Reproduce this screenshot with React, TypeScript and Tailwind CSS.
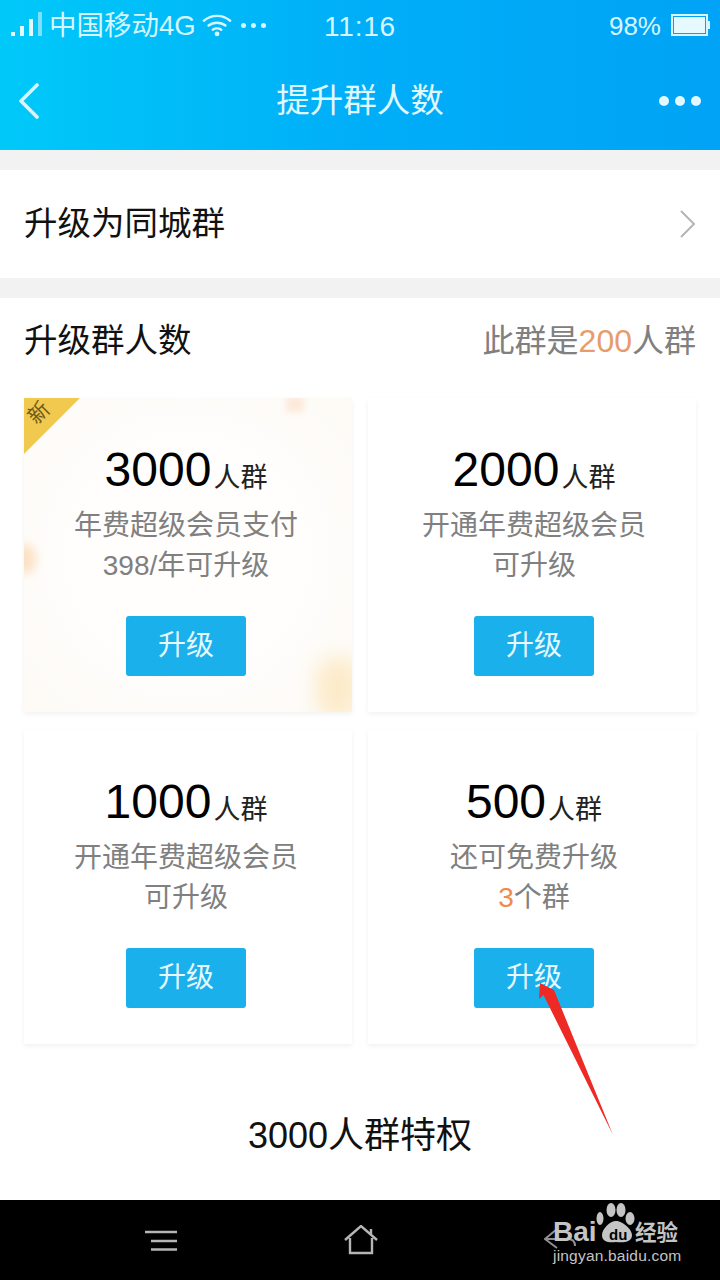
import type { ReactNode } from 'react'

const font = { fontFamily: '"Liberation Sans", "Noto Sans CJK SC", sans-serif' }

const plans: { size: string; lines: ReactNode[]; fresh?: boolean }[] = [
  { size: '3000', lines: ['年费超级会员支付', '398/年可升级'], fresh: true },
  { size: '2000', lines: ['开通年费超级会员', '可升级'] },
  { size: '1000', lines: ['开通年费超级会员', '可升级'] },
  { size: '500', lines: ['还可免费升级', <><span className="text-[#ee8a52]">3</span>个群</>] },
]

function StatusBar() {
  return (
    <div className="h-[50px] flex items-center pl-[11px] pr-[10px] text-[#d6f5ff]">
      {/* Signal */}
      <svg width="32" height="28" viewBox="0 0 32 28" className="shrink-0 -mt-[1px]">
        <rect x="0" y="21" width="4" height="4" fill="#e4f9ff" />
        <rect x="9" y="15" width="4" height="10" fill="#e4f9ff" />
        <rect x="18" y="8" width="4" height="17" fill="#e4f9ff" />
        <rect x="27" y="1" width="4" height="24" fill="#7fe0fb" />
      </svg>
      <span className="ml-[6px] mt-[2px] text-[27.5px] leading-none w-[153px] whitespace-nowrap">中国移动4G</span>
      {/* Wifi */}
      <svg width="30" height="26" viewBox="0 0 32 26" fill="none" stroke="#d6f5ff" strokeWidth="2.6" strokeLinecap="round" className="shrink-0">
        <path d="M2 8.5C10 1.5 22 1.5 30 8.5" />
        <path d="M7 13.5C12 9.5 20 9.5 25 13.5" />
        <path d="M11.5 18C14 16.2 18 16.2 20.5 18" />
        <circle cx="16" cy="22.5" r="2.6" fill="#d6f5ff" stroke="none" />
      </svg>
      <div className="flex gap-[5px] ml-[9px]">
        <span className="w-[5px] h-[5px] rounded-full bg-[#d6f5ff]" />
        <span className="w-[5px] h-[5px] rounded-full bg-[#d6f5ff]" />
        <span className="w-[5px] h-[5px] rounded-full bg-[#d6f5ff]" />
      </div>
      <span className="ml-[58px] mt-[4px] text-[28px] leading-none tracking-[0.8px]">11:16</span>
      <span className="ml-auto mt-[1px] text-[26px] leading-none">98%</span>
      {/* Battery */}
      <div className="ml-[10px] flex items-center">
        <div className="w-[37px] h-[22px] border-2 border-[#d6f5ff] p-[1px]">
          <div className="w-full h-full bg-[#e6f9ff]" />
        </div>
        <div className="w-[2px] h-[8px] bg-[#d6f5ff]" />
      </div>
    </div>
  )
}

function PlanCard({ size, lines, fresh, right }: { size: string; lines: ReactNode[]; fresh?: boolean; right: boolean }) {
  return (
    <div className={`relative h-[314px] flex flex-col items-center pt-[44px] shadow-[0_2px_5px_rgba(0,0,0,0.06)] ${right ? 'pl-[4px]' : 'pr-[4px]'} ${fresh ? 'bg-[radial-gradient(circle,#fffefd_45%,#fdfaf5_100%)]' : 'bg-white'}`}>
      {fresh && (
        <>
          <div className="absolute inset-0 overflow-hidden">
            <div className="absolute left-[262px] -top-[2px] w-[18px] h-[16px] bg-[#fce9da] blur-[3px]" />
            <div className="absolute -left-[12px] top-[146px] w-[24px] h-[30px] rounded-full bg-[#fbe2c6] blur-[5px]" />
            <div className="absolute -right-[8px] -bottom-[8px] w-[44px] h-[64px] rounded-full bg-[#fcebc9] blur-[10px]" />
          </div>
          <div className="absolute left-0 top-0 w-[56px] h-[56px] bg-[#f0c94e] [clip-path:polygon(0_0,100%_0,0_100%)]" />
          <span className="absolute left-[4px] top-[4px] text-[21px] leading-none text-[#6e5a1c] -rotate-45">新</span>
        </>
      )}
      <div className="relative h-[56px] flex items-end leading-none text-black">
        <span className="text-[48px] leading-[56px]">{size}</span>
        <span className="text-[27px] leading-[40px] ml-[2px] text-[#222]">人群</span>
      </div>
      <div className="relative mt-[8px] text-[28px] leading-[40px] text-[#808080] text-center">
        {lines.map((line, i) => (
          <div key={i}>{line}</div>
        ))}
      </div>
      <button className="relative mt-[30px] w-[120px] h-[60px] rounded-[3px] bg-[#1ab0ec] text-[28px] text-[#e6f9ff]">升级</button>
    </div>
  )
}

export default function App() {
  return (
    <div className="relative w-[720px] h-[1280px] flex flex-col overflow-hidden bg-[#f2f2f2]" style={font}>
      {/* Header */}
      <header className="h-[150px] shrink-0 bg-gradient-to-r from-[#00c9f9] via-[#00aef8] to-[#00a3f5]">
        <StatusBar />
        <div className="h-[100px] flex items-center px-[16px] pt-[1px]">
          <div className="w-[60px] pl-[2px]">
            <svg width="22" height="36" viewBox="0 0 22 36" fill="none" stroke="#d8f6ff" strokeWidth="3.6" strokeLinecap="round" strokeLinejoin="round">
              <path d="M19 2L3 18L19 34" />
            </svg>
          </div>
          <h1 className="flex-1 text-center text-[33.5px] leading-none text-[#e0f8ff]">提升群人数</h1>
          <div className="w-[60px] flex justify-end gap-[6px] pr-[3px]">
            <span className="w-[10px] h-[10px] rounded-full bg-[#e0f8ff]" />
            <span className="w-[10px] h-[10px] rounded-full bg-[#e0f8ff]" />
            <span className="w-[10px] h-[10px] rounded-full bg-[#e0f8ff]" />
          </div>
        </div>
      </header>

      {/* City group row */}
      <div className="mt-[20px] h-[108px] shrink-0 flex items-center justify-between px-[24px] bg-white">
        <span className="text-[33.5px] leading-none text-[#111] -mt-[1px]">升级为同城群</span>
        <svg width="17" height="30" viewBox="0 0 17 30" fill="none" stroke="#b4b4b4" strokeWidth="2">
          <path d="M2 2L15 15L2 28" />
        </svg>
      </div>

      {/* Upgrade section */}
      <section className="mt-[20px] flex-1 bg-white">
        <div className="h-[84px] flex items-center justify-between px-[24px] pt-[2px]">
          <span className="text-[33.5px] leading-none text-[#111]">升级群人数</span>
          <span className="text-[32px] leading-none text-[#808080]">
            此群是<span className="text-[#e89c6c]">200</span>人群
          </span>
        </div>
        <div className="mt-[16px] grid grid-cols-[328px_328px] gap-x-[16px] gap-y-[18px] pl-[24px]">
          {plans.map((p, i) => (
            <PlanCard key={p.size} {...p} right={i % 2 === 1} />
          ))}
        </div>
        <div className="mt-[74px] text-center text-[36px] leading-none text-[#111]">3000人群特权</div>
      </section>

      {/* Android nav */}
      <footer className="relative h-[80px] shrink-0 bg-black">
        <svg width="34" height="24" viewBox="0 0 34 24" fill="none" stroke="#b5b5b5" strokeWidth="2.4" className="absolute left-[144px] top-[29px]">
          <path d="M1 3H33M7 12H33M7 20.5H33" />
        </svg>
        <svg width="34" height="30" viewBox="0 0 34 30" fill="none" stroke="#b5b5b5" strokeWidth="2.4" className="absolute left-[344px] top-[25px]">
          <path d="M1 15L17 1L33 15M6 13V28H28V13M27 4V9" />
        </svg>
        <svg width="33" height="22" viewBox="0 0 33 22" fill="none" stroke="#8f8f8f" strokeWidth="2" className="absolute left-[544px] top-[28px]">
          <path d="M13 1L1 11L13 20M1 11H24Q31 11 31 18" />
        </svg>
      </footer>

      {/* Baidu watermark */}
      <div className="absolute left-[552px] top-[1203px] w-[168px] h-[70px] text-[#c4c4c4]">
        <svg width="41" height="41" viewBox="0 0 41 41" fill="#c4c4c4" className="absolute left-[43px] top-0">
          <ellipse cx="16" cy="7" rx="4.5" ry="7" />
          <ellipse cx="26" cy="7" rx="4.5" ry="7" />
          <ellipse cx="5" cy="15.5" rx="3.5" ry="6.5" />
          <ellipse cx="35" cy="15.5" rx="4.5" ry="6.5" />
          <path d="M21 18C15 18 7 26 7 32C7 39 14 40 21 39C29 40 37 39 37 32C37 26 27 18 21 18Z" />
        </svg>
        <span className="absolute left-[1px] top-[15px] text-[28px] leading-none font-bold whitespace-nowrap">Bai</span>
        <span className="absolute left-[57px] top-[24px] text-[15px] leading-none font-bold text-black whitespace-nowrap">du</span>
        <span className="absolute left-[83px] top-[20px] text-[21.5px] leading-none font-bold whitespace-nowrap">经验</span>
        <span className="absolute left-[1px] top-[45px] text-[15.5px] leading-none tracking-[0.2px] whitespace-nowrap">jingyan.baidu.com</span>
      </div>

      {/* Red annotation arrow */}
      <svg width="90" height="160" viewBox="0 0 90 160" className="absolute left-[530px] top-[980px]">
        <path d="M10 3L9 19L13.5 15L83 155L24 10Z" fill="#ee2a24" />
      </svg>
    </div>
  )
}
